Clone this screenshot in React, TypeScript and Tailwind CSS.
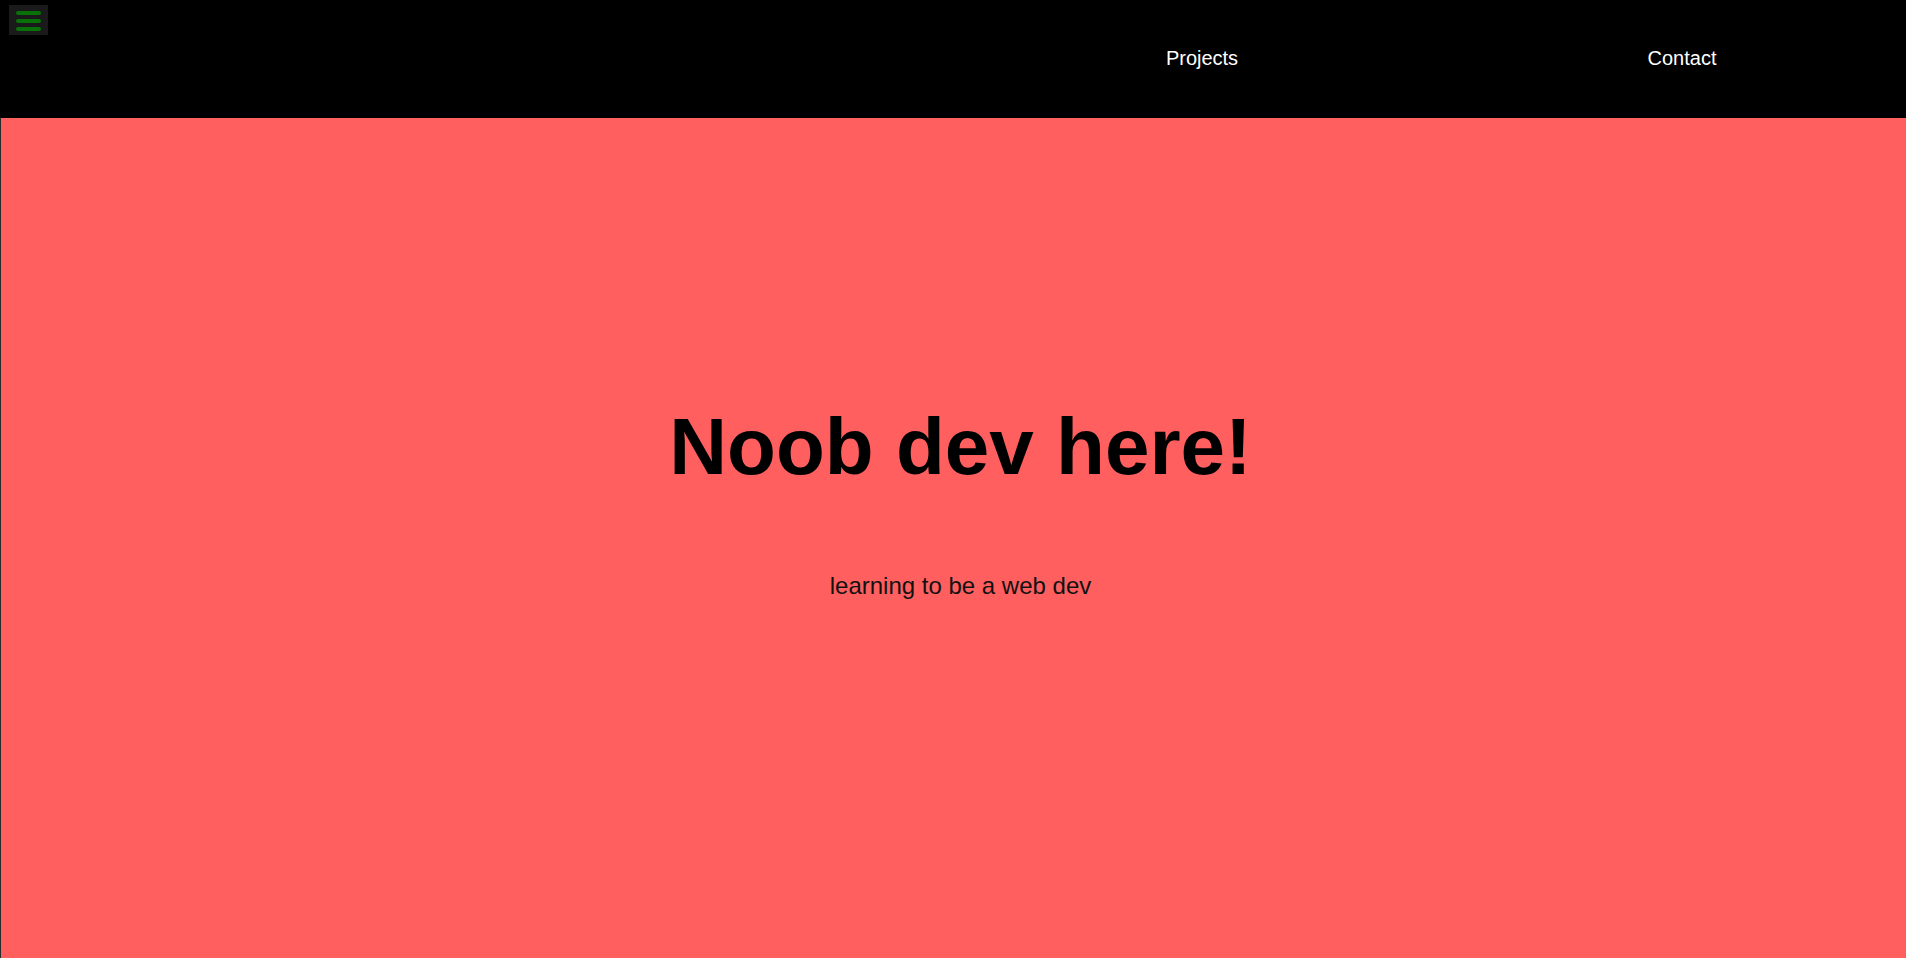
import React from "react";

export default function App() {
  return (
    <div
      className="w-full h-[958px] overflow-hidden flex flex-col bg-[#ff5f5f]"
      style={{ fontFamily: '"Liberation Sans", Arial, sans-serif' }}
    >
      <header className="h-[118px] shrink-0 bg-black flex">
        <div className="mt-[5px] ml-[9px] w-[39px] h-[30px] bg-[#1a1a1a] flex flex-col items-center pt-[6px] gap-[4px]">
          <span className="block w-[25px] h-[4px] rounded-full bg-[#087208]" />
          <span className="block w-[25px] h-[4px] rounded-full bg-[#087208]" />
          <span className="block w-[25px] h-[4px] rounded-full bg-[#087208]" />
        </div>
        <nav className="ml-auto pr-[4px] pb-[2px] flex items-center gap-[40px]">
          <a className="w-[440px] text-center text-[20px] leading-[24px] text-white">Projects</a>
          <a className="w-[440px] text-center text-[20px] leading-[24px] text-white">Contact</a>
        </nav>
      </header>
      <main className="flex-1 border-l border-[#2b2b2b] bg-[#ff5f5f] flex flex-col items-center pt-[283px] pl-[14px]">
        <h1 className="text-[80px] leading-[92px] font-bold text-black">Noob dev here!</h1>
        <p className="mt-[79px] text-[24px] leading-[28px] text-[#111]">learning to be a web dev</p>
      </main>
    </div>
  );
}
